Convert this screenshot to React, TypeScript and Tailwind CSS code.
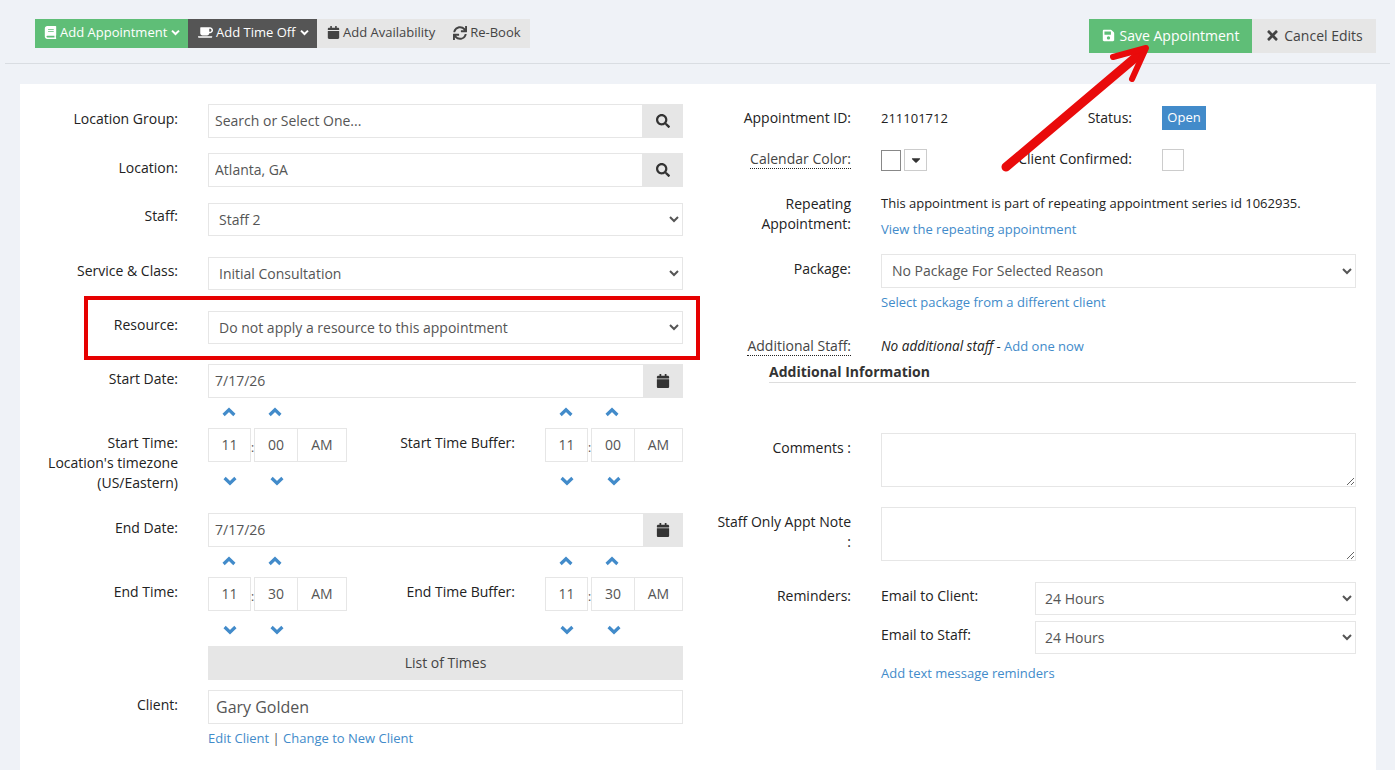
import type { ReactNode } from 'react';
import { FaBook, FaCalendar, FaCaretDown, FaCoffee, FaSave, FaSearch, FaSync, FaTimes } from 'react-icons/fa';

const inputCls = 'border border-[#e6e6e6] bg-white text-[14px] text-[#555] outline-none';

function Label({ children, width, className = '' }: { children: ReactNode; width: string; className?: string }) {
  return <div className={`${width} shrink-0 text-right text-[14px] leading-5 text-[#222] ${className}`}>{children}</div>;
}

function LeftRow({ label, className = '', labelClass = 'pt-[5px]', children }: { label: ReactNode; className?: string; labelClass?: string; children: ReactNode }) {
  return (
    <div className={`flex gap-[30px] ${className}`}>
      <Label width="w-[158px]" className={labelClass}>{label}</Label>
      <div className="min-w-0 flex-1">{children}</div>
    </div>
  );
}

function RightRow({ label, className = '', labelClass = 'pt-1', children }: { label: ReactNode; className?: string; labelClass?: string; children: ReactNode }) {
  return (
    <div className={`flex gap-[30px] ${className}`}>
      <Label width="w-[135px]" className={labelClass}>{label}</Label>
      <div className="min-w-0 flex-1">{children}</div>
    </div>
  );
}

function AddonField({ value, placeholder, icon, addonWidth = 'w-10' }: { value?: string; placeholder?: string; icon: ReactNode; addonWidth?: string }) {
  return (
    <div className="flex h-[34px]">
      <input readOnly value={value} placeholder={placeholder} className={`${inputCls} h-full min-w-0 flex-1 border-r-0 pb-[2px] pl-1.5 placeholder:text-[#555]`} />
      <div className={`${addonWidth} flex h-full items-center justify-center bg-[#e6e6e6] text-[14px] text-[#333]`}>{icon}</div>
    </div>
  );
}

function Select({ value, className = '' }: { value: string; className?: string }) {
  return (
    <select defaultValue={value} className={`${inputCls} block w-full pr-0 ${className}`}>
      <option>{value}</option>
    </select>
  );
}

function TimeBox({ value, width }: { value: string; width: string }) {
  return <div className={`${inputCls} ${width} flex h-[34px] items-center justify-center pb-[2px]`}>{value}</div>;
}

function Chevron({ up = false }: { up?: boolean }) {
  return (
    <svg width="14" height="10" viewBox="0 0 14 10" fill="none" className="block">
      <path d={up ? 'M1.6 8 L7 2.8 L12.4 8' : 'M1.6 2 L7 7.2 L12.4 2'} stroke="#428bca" strokeWidth="3.2" />
    </svg>
  );
}

function TimeSpinner({ hour, minute, amWidth }: { hour: string; minute: string; amWidth: string }) {
  return (
    <div>
      <div className="flex h-6 items-center pb-2">
        <div className="w-[43px] pl-[14px]"><Chevron up /></div>
        <div className="ml-[3px] w-[44px] pl-[14px]"><Chevron up /></div>
      </div>
      <div className="flex items-center">
        <TimeBox value={hour} width="w-[43px]" />
        <span className="w-[3px] pt-1.5 text-center text-[12px] text-[#555]">:</span>
        <TimeBox value={minute} width="w-[44px]" />
        <TimeBox value="AM" width={`${amWidth} -ml-px`} />
      </div>
      <div className="flex h-[28px] items-center pt-[10px]">
        <div className="w-[43px] pl-[15px]"><Chevron /></div>
        <div className="ml-[3px] w-[44px] pl-4"><Chevron /></div>
      </div>
    </div>
  );
}

function TimeRow({ label, bufferLabel, minute, className = '' }: { label: ReactNode; bufferLabel: string; minute: string; className?: string }) {
  return (
    <LeftRow label={label} className={className} labelClass="pt-[29px]">
      <div className="flex justify-between">
        <TimeSpinner hour="11" minute={minute} amWidth="w-[50px]" />
        <div className="flex gap-[30px]">
          <div className="pt-[29px] text-[14px] leading-5 text-[#222]">{bufferLabel}</div>
          <TimeSpinner hour="11" minute={minute} amWidth="w-[49px]" />
        </div>
      </div>
    </LeftRow>
  );
}

function ToolButton({ icon, label, className, caret }: { icon: ReactNode; label: string; className: string; caret?: boolean }) {
  return (
    <button className={`flex h-full items-center gap-[3px] pb-[2px] text-[13px] ${className}`}>
      {icon}
      {label}
      {caret && (
        <svg width="9" height="7" viewBox="0 0 9 7" fill="none" className="ml-[1px]">
          <path d="M1 1.6 L4.5 5 L8 1.6" stroke="currentColor" strokeWidth="2" />
        </svg>
      )}
    </button>
  );
}

export default function App() {
  return (
    <div className="relative flex h-screen flex-col overflow-hidden bg-[#eff2f7] font-['Open_Sans',sans-serif]">
      <header className="mx-[5px] flex h-[64px] shrink-0 items-start justify-between border-b border-[#d9dde2] pl-[30px] pr-[14px] pt-[19px]">
        <div className="flex h-[29px]">
          <ToolButton icon={<FaBook className="text-[13px]" />} label="Add Appointment" caret className="w-[153px] bg-[#5fbe77] pl-[9px] text-white" />
          <ToolButton icon={<FaCoffee className="text-[15px]" />} label="Add Time Off" caret className="w-[129px] bg-[#555] pl-[10px] text-white" />
          <div className="flex h-full w-[213px] gap-[18px] bg-[#e6e6e6] pl-[10px] text-[#444]">
            <ToolButton icon={<FaCalendar className="text-[13px]" />} label="Add Availability" className="" />
            <ToolButton icon={<FaSync className="text-[14px]" />} label="Re-Book" className="" />
          </div>
        </div>
        <div className="flex h-[34px] text-[14px]">
          <button className="flex w-[163px] items-center justify-center gap-[5px] bg-[#5fbe77] pb-[2px] text-white"><FaSave className="text-[13px]" />Save Appointment</button>
          <button className="flex w-[124px] items-center justify-center gap-[4px] bg-[#e6e6e6] pb-[2px] text-[#444]"><FaTimes className="text-[15px]" />Cancel Edits</button>
        </div>
      </header>

      <main className="ml-[20px] mr-[19px] mt-[20px] flex flex-1 bg-white pt-[20px]">
        <section className="w-[663px] shrink-0">
          <LeftRow label="Location Group:"><AddonField placeholder="Search or Select One..." icon={<FaSearch />} addonWidth="w-[41px]" /></LeftRow>
          <LeftRow label="Location:" className="mt-[15px]"><AddonField value="Atlanta, GA" icon={<FaSearch />} addonWidth="w-[41px]" /></LeftRow>
          <LeftRow label="Staff:" labelClass="pt-[3px]" className="mt-4"><Select value="Staff 2" className="h-[33px] pl-1.5" /></LeftRow>
          <LeftRow label="Service & Class:" labelClass="pt-1" className="mt-[21px]"><Select value="Initial Consultation" className="h-[33px] pl-1.5" /></LeftRow>
          <LeftRow label="Resource:" labelClass="pt-1" className="mt-[21px]"><Select value="Do not apply a resource to this appointment" className="h-[33px] pl-1.5" /></LeftRow>
          <LeftRow label="Start Date:" className="mt-5"><AddonField value="7/17/26" icon={<FaCalendar />} /></LeftRow>
          <TimeRow label={<>Start Time:<br />Location's timezone<br />(US/Eastern)</>} bufferLabel="Start Time Buffer:" minute="00" className="mt-1.5" />
          <LeftRow label="End Date:" className="mt-5"><AddonField value="7/17/26" icon={<FaCalendar />} /></LeftRow>
          <TimeRow label="End Time:" bufferLabel="End Time Buffer:" minute="30" className="mt-1.5" />
          <div className="ml-[188px] mt-[7px] flex h-[34px] items-center justify-center bg-[#e6e6e6] pb-[2px] text-[14px] text-[#444]">List of Times</div>
          <LeftRow label="Client:" className="mt-2.5"><input readOnly value="Gary Golden" className={`${inputCls} h-[34px] w-full pl-[7px] !text-[16px]`} /></LeftRow>
          <div className="ml-[188px] mt-1 text-[13px] leading-5 text-[#555]">
            <a className="text-[#428bca]">Edit Client</a> | <a className="text-[#428bca]">Change to New Client</a>
          </div>
        </section>

        <section className="ml-[33px] w-[640px] shrink-0">
          <RightRow label="Appointment ID:" labelClass="pt-1">
            <div className="flex items-start">
              <div className="w-[251px] pt-1 text-right">
                <div className="flex justify-between">
                  <span className="text-[13px] leading-5 text-[#222]">211101712</span>
                  <span className="text-[14px] leading-5 text-[#222]">Status:</span>
                </div>
              </div>
              <span className="ml-[30px] mt-0.5 flex h-6 w-11 items-center justify-center bg-[#428bca] text-[13px] text-white">Open</span>
            </div>
          </RightRow>
          <RightRow label={<span className="border-b border-dotted border-[#222] text-[#444]">Calendar Color:</span>} labelClass="pt-0" className="mt-[19px]">
            <div className="flex items-start">
              <div className="flex w-[251px] justify-between">
                <div className="flex">
                  <span className="mt-px h-[21px] w-[20px] border border-[#888]" />
                  <span className="ml-[3px] flex h-[22px] w-[23px] items-center justify-center border border-[#ccc] text-[14px] text-[#333]"><FaCaretDown /></span>
                </div>
                <span className="text-[14px] leading-5 text-[#222]">Client Confirmed:</span>
              </div>
              <span className="ml-[30px] h-[22px] w-[22px] border border-[#ccc]" />
            </div>
          </RightRow>
          <RightRow label="Repeating Appointment:" labelClass="pt-0" className="mt-[23px]">
            <p className="-mt-px text-[13px] leading-5 text-[#222]">This appointment is part of repeating appointment series id 1062935.</p>
            <a className="mt-1.5 block text-[13px] leading-5 text-[#428bca]">View the repeating appointment</a>
          </RightRow>
          <RightRow label="Package:" labelClass="pt-[5px]" className="mt-[15px]">
            <Select value="No Package For Selected Reason" className="h-[34px] pb-[2px] pl-1.5" />
            <a className="mt-1 block text-[13px] leading-5 text-[#428bca]">Select package from a different client</a>
          </RightRow>
          <RightRow label={<span className="border-b border-dotted border-[#222] text-[#444]">Additional Staff:</span>} labelClass="pt-0" className="mt-[24px]">
            <p className="text-[13px] leading-5 text-[#222]"><em className="text-[13.6px]">No additional staff</em> - <a className="text-[#428bca]">Add one now</a></p>
          </RightRow>
          <h3 className="ml-[53px] mt-1.5 border-b border-[#ddd] text-[14px] font-bold leading-5 text-[#333]">Additional Information</h3>
          <RightRow label="Comments :" labelClass="pt-[5px]" className="mt-[50px]">
            <textarea className={`${inputCls} block h-[54px] w-full`} />
          </RightRow>
          <RightRow label="Staff Only Appt Note :" labelClass="pt-[5px]" className="mt-5">
            <textarea className={`${inputCls} block h-[54px] w-full`} />
          </RightRow>
          <RightRow label="Reminders:" labelClass="pt-1" className="mt-[21px]">
            <div className="flex h-[33px]">
              <span className="w-[154px] shrink-0 pt-1 text-[14px] leading-5 text-[#222]">Email to Client:</span>
              <Select value="24 Hours" className="h-[33px] pl-[5px]" />
            </div>
            <div className="mt-1.5 flex h-[33px]">
              <span className="w-[154px] shrink-0 pt-1 text-[14px] leading-5 text-[#222]">Email to Staff:</span>
              <Select value="24 Hours" className="h-[33px] pl-[5px]" />
            </div>
            <a className="mt-[9px] block text-[13px] leading-5 text-[#428bca]">Add text message reminders</a>
          </RightRow>
        </section>
      </main>

      {/* annotations on top of the screenshot */}
      <div className="absolute left-[84px] top-[296px] h-[64px] w-[616px] border-4 border-[#e60000]" />
      <svg className="absolute left-[990px] top-[35px]" width="180" height="145" viewBox="990 35 180 145" fill="none">
        <path d="M1006 167 L1142 52" stroke="#e90b0b" strokeWidth="9" strokeLinecap="round" />
        <path d="M1113 57 L1146 48 L1132 79" stroke="#e90b0b" strokeWidth="6" strokeLinecap="round" strokeLinejoin="round" />
      </svg>
    </div>
  );
}
